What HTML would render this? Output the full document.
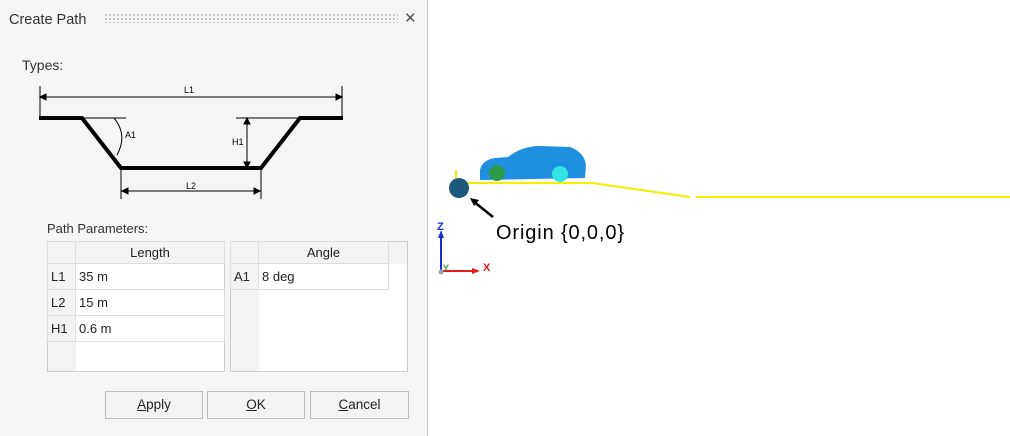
<!DOCTYPE html>
<html><head><meta charset="utf-8"><style>
body{margin:0;width:1010px;height:436px;background:#fff;position:relative;overflow:hidden;font-family:"Liberation Sans",sans-serif;}
.dlg{position:absolute;left:0;top:0;width:427px;height:436px;background:#f5f5f5;border-right:1px solid #c8c8c8;}
.t{position:absolute;font-size:14px;color:#333;}
table{border-collapse:collapse;position:absolute;background:#fff;font-size:13px;color:#222;}
.b{position:absolute;top:391px;height:26px;border:1px solid #bdbdbd;background:#f3f3f3;font-size:13.5px;text-align:center;line-height:26px;color:#222;}
</style></head><body>
<div class="dlg">
<div class="t" style="left:9px;top:12px;font-size:14.5px;">Create Path</div>
<div style="position:absolute;left:104px;top:13px;width:294px;height:10px;background-image:radial-gradient(circle,#aaa 0.7px,transparent 1px);background-size:4px 4px;"></div>
<div class="t" style="left:404px;top:9px;font-size:15px;color:#555;">✕</div>
<div class="t" style="left:22px;top:57px;">Types:</div>
<svg style="position:absolute;left:0;top:0" width="427" height="210">
<g stroke="#000" fill="none">
<line x1="40" y1="86" x2="40" y2="118" stroke-width="1"/><line x1="342" y1="86" x2="342" y2="118" stroke-width="1"/>
<line x1="42" y1="97" x2="340" y2="97"/>
<path d="M40 97l6-3v6zM342 97l-6-3v6z" fill="#000"/>
<path d="M39 118H82L121 168H261L300 118H343" stroke-width="4"/>
<line x1="82" y1="118" x2="126" y2="118"/><line x1="236" y1="118" x2="300" y2="118"/>
<line x1="247" y1="120" x2="247" y2="166"/>
<path d="M247 118l-3 6h6zM247 168l-3-6h6z" fill="#000"/>
<path d="M114 118 Q128 135 117 155"/>
<line x1="121" y1="168" x2="121" y2="199"/><line x1="261" y1="168" x2="261" y2="199"/>
<line x1="123" y1="191" x2="259" y2="191"/>
<path d="M122 191l6-3v6zM260 191l-6-3v6z" fill="#000"/>
</g>
<g font-size="9" font-family="Liberation Sans" fill="#000">
<text x="184" y="93">L1</text><text x="125" y="138">A1</text><text x="232" y="145">H1</text><text x="186" y="189">L2</text></g>
</svg>
<div class="t" style="left:47px;top:221px;font-size:13px;">Path Parameters:</div>
<table style="left:47px;top:241px;width:178px;border:1px solid #ccc;">
<tr style="height:22px;background:#f3f3f3"><td style="width:25px;border:1px solid #ddd"></td><td style="text-align:center;border:1px solid #ddd">Length</td></tr>
<tr style="height:26px"><td style="background:#f3f3f3;border:1px solid #ddd;padding-left:3px">L1</td><td style="border:1px dotted #555;padding-left:3px">35 m</td></tr>
<tr style="height:26px"><td style="background:#f3f3f3;border:1px solid #ddd;padding-left:3px">L2</td><td style="border:1px solid #ddd;padding-left:3px">15 m</td></tr>
<tr style="height:26px"><td style="background:#f3f3f3;border:1px solid #ddd;padding-left:3px">H1</td><td style="border:1px solid #ddd;padding-left:3px">0.6 m</td></tr>
<tr style="height:30px"><td style="background:#f3f3f3"></td><td></td></tr>
</table>
<table style="left:230px;top:241px;width:178px;border:1px solid #ccc;">
<tr style="height:22px;background:#f3f3f3"><td style="width:25px;border:1px solid #ddd"></td><td style="width:127px;text-align:center;border:1px solid #ddd">Angle</td><td></td></tr>
<tr style="height:26px"><td style="background:#f3f3f3;border:1px solid #ddd;padding-left:3px">A1</td><td style="border:1px solid #ddd;padding-left:3px">8 deg</td><td></td></tr>
<tr style="height:82px"><td style="background:#f3f3f3"></td><td></td><td></td></tr>
</table>
<div class="b" style="left:105px;width:96px"><u>A</u>pply</div>
<div class="b" style="left:207px;width:96px"><u>O</u>K</div>
<div class="b" style="left:310px;width:97px"><u>C</u>ancel</div>
</div>
<svg style="position:absolute;left:0;top:0" width="1010" height="436">
<g stroke="#f4f000" stroke-width="2" fill="none">
<line x1="456" y1="170" x2="456" y2="183"/>
<path d="M456 183H592L690 197"/><line x1="696" y1="197" x2="1010" y2="197"/></g>
<path d="M480 170 Q482 160 495 158 L508 157 Q522 146 540 146 L570 147 Q584 152 586 165 L585 178 L480 180Z" fill="#1f8fe0"/>
<circle cx="497" cy="173" r="8" fill="#2d9a4a"/><circle cx="560" cy="174" r="8" fill="#30e4e4"/>
<circle cx="459" cy="188" r="10" fill="#1b5a7a"/>
<line x1="493" y1="217" x2="473" y2="201" stroke="#000" stroke-width="2.5"/>
<path d="M470 198l9 2-5 6z" fill="#000"/>
<text x="496" y="239" font-size="20" font-family="Liberation Sans" fill="#000" textLength="128">Origin {0,0,0}</text>
<line x1="441" y1="271" x2="441" y2="236" stroke="#1a2bd8" stroke-width="2"/><path d="M441 230l-3 8h6z" fill="#1a2bd8"/>
<line x1="441" y1="271" x2="474" y2="271" stroke="#e21b1b" stroke-width="2"/><path d="M480 271l-8-3v6z" fill="#e21b1b"/>
<text x="437" y="230" font-size="11" font-weight="bold" fill="#1a2bd8" font-family="Liberation Sans">Z</text>
<text x="483" y="271" font-size="11" font-weight="bold" fill="#e21b1b" font-family="Liberation Sans">X</text>
<text x="443" y="271" font-size="9" font-weight="bold" fill="#2a9a3a" font-family="Liberation Sans">Y</text>
<circle cx="441" cy="272" r="2.5" fill="#9aa"/>
</svg>
</body></html>
